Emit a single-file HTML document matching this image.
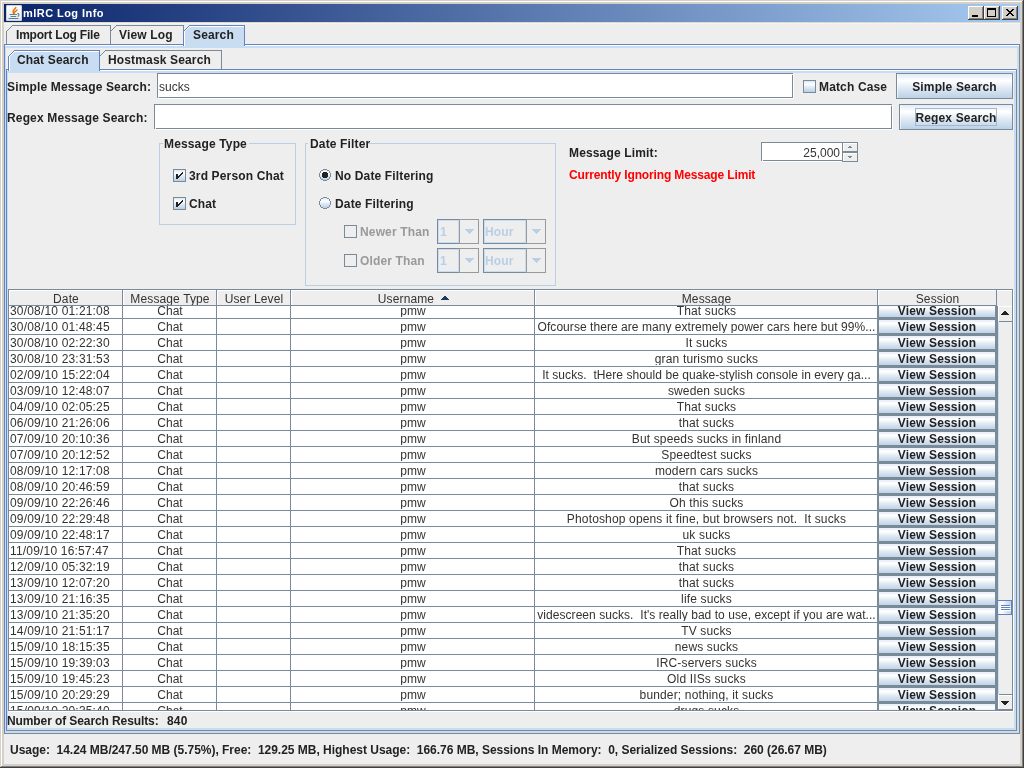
<!DOCTYPE html>
<html><head><meta charset="utf-8"><style>
html,body{margin:0;padding:0}
body{width:1024px;height:768px;position:relative;overflow:hidden;background:#d4d0c8;color:#222;font-family:"Liberation Sans",sans-serif}
div,span{position:absolute}
.t{white-space:pre}
.b{letter-spacing:0.15px}
body{will-change:transform}
</style></head><body>
<div style="left:1px;top:1px;width:1021px;height:1px;background:#ffffff;"></div>
<div style="left:1px;top:1px;width:1px;height:765px;background:#ffffff;"></div>
<div style="left:1022px;top:1px;width:1px;height:766px;background:#808080;"></div>
<div style="left:1px;top:766px;width:1022px;height:1px;background:#808080;"></div>
<div style="left:1023px;top:0px;width:1px;height:768px;background:#404040;"></div>
<div style="left:0px;top:767px;width:1024px;height:1px;background:#404040;"></div>
<div style="left:4px;top:4px;width:1016px;height:18px;background:;background:linear-gradient(to right,#0a246a,#a6caf0)"></div>
<div style="left:4px;top:22px;width:1016px;height:742px;background:#eeeeee;"></div>
<div style="left:4px;top:22px;width:1016px;height:1px;background:#dedad0;"></div>
<div style="left:4px;top:23px;width:1016px;height:1px;background:#f4f4f4;"></div>
<svg style="position:absolute;left:6px;top:5px" width="16" height="16" viewBox="0 0 16 16">
<defs><linearGradient id="ig" x1="0" y1="0" x2="0" y2="1"><stop offset="0" stop-color="#ffffff"/><stop offset="1" stop-color="#e8e8e4"/></linearGradient></defs>
<rect x="0" y="0" width="16" height="16" rx="1.5" fill="url(#ig)"/>
<rect x="0.5" y="0.5" width="15" height="15" rx="1.5" fill="none" stroke="#c9d3dc" stroke-width="1"/>
<path d="M9.8 2.6 L7.0 6.2 L7.6 8.6" fill="none" stroke="#e76f00" stroke-width="1.4" stroke-linecap="round"/>
<path d="M11.0 5.0 L8.4 7.4 L7.8 8.8" fill="none" stroke="#e76f00" stroke-width="1.3" stroke-linecap="round"/>
<path d="M4 9.5 H10.6 M5 11.5 H9.8 M3 13.5 H12" stroke="#5382a1" stroke-width="1.1" stroke-linecap="round"/>
<path d="M11.4 8.4 C13.4 8.6 13.4 11.0 11.6 11.6" fill="none" stroke="#5382a1" stroke-width="1.1"/>
</svg>
<span class="t b" style="left:23px;top:7.69px;font-size:11px;line-height:11px;font-weight:bold;color:#fff;letter-spacing:0.45px">mIRC Log Info</span>
<div style="left:968px;top:6px;width:16px;height:14px;background:#d4d0c8;"></div>
<div style="left:968px;top:6px;width:16px;height:1px;background:#ffffff;"></div>
<div style="left:968px;top:6px;width:1px;height:14px;background:#ffffff;"></div>
<div style="left:968px;top:19px;width:16px;height:1px;background:#404040;"></div>
<div style="left:983px;top:6px;width:1px;height:14px;background:#404040;"></div>
<div style="left:969px;top:18px;width:14px;height:1px;background:#808080;"></div>
<div style="left:982px;top:7px;width:1px;height:12px;background:#808080;"></div>
<div style="left:984px;top:6px;width:16px;height:14px;background:#d4d0c8;"></div>
<div style="left:984px;top:6px;width:16px;height:1px;background:#ffffff;"></div>
<div style="left:984px;top:6px;width:1px;height:14px;background:#ffffff;"></div>
<div style="left:984px;top:19px;width:16px;height:1px;background:#404040;"></div>
<div style="left:999px;top:6px;width:1px;height:14px;background:#404040;"></div>
<div style="left:985px;top:18px;width:14px;height:1px;background:#808080;"></div>
<div style="left:998px;top:7px;width:1px;height:12px;background:#808080;"></div>
<div style="left:1002px;top:6px;width:16px;height:14px;background:#d4d0c8;"></div>
<div style="left:1002px;top:6px;width:16px;height:1px;background:#ffffff;"></div>
<div style="left:1002px;top:6px;width:1px;height:14px;background:#ffffff;"></div>
<div style="left:1002px;top:19px;width:16px;height:1px;background:#404040;"></div>
<div style="left:1017px;top:6px;width:1px;height:14px;background:#404040;"></div>
<div style="left:1003px;top:18px;width:14px;height:1px;background:#808080;"></div>
<div style="left:1016px;top:7px;width:1px;height:12px;background:#808080;"></div>
<div style="left:972px;top:15px;width:6px;height:2px;background:#000;"></div>
<div style="left:987px;top:8px;width:9px;height:9px;background:transparent;box-sizing:border-box;border:1px solid #000;border-top-width:2px"></div>
<svg style="position:absolute;left:1002px;top:6px" width="16" height="14" viewBox="0 0 16 14" shape-rendering="crispEdges"><rect x="4" y="3" width="2" height="1" fill="#000"/><rect x="10" y="3" width="2" height="1" fill="#000"/><rect x="5" y="4" width="2" height="1" fill="#000"/><rect x="9" y="4" width="2" height="1" fill="#000"/><rect x="6" y="5" width="2" height="1" fill="#000"/><rect x="8" y="5" width="2" height="1" fill="#000"/><rect x="7" y="6" width="2" height="1" fill="#000"/><rect x="7" y="6" width="2" height="1" fill="#000"/><rect x="8" y="7" width="2" height="1" fill="#000"/><rect x="6" y="7" width="2" height="1" fill="#000"/><rect x="9" y="8" width="2" height="1" fill="#000"/><rect x="5" y="8" width="2" height="1" fill="#000"/><rect x="10" y="9" width="2" height="1" fill="#000"/><rect x="4" y="9" width="2" height="1" fill="#000"/></svg>
<div style="left:5px;top:46px;width:1014px;height:687px;background:#c8ddf2;"></div>
<div style="left:4px;top:44px;width:180px;height:1px;background:#6382bf;"></div>
<div style="left:244px;top:44px;width:775px;height:1px;background:#6382bf;"></div>
<div style="left:5px;top:45px;width:180px;height:1px;background:#ffffff;"></div>
<div style="left:245px;top:45px;width:774px;height:1px;background:#ffffff;"></div>
<div style="left:4px;top:44px;width:1px;height:690px;background:#6382bf;"></div>
<div style="left:1019px;top:44px;width:1px;height:690px;background:#7a8a99;"></div>
<div style="left:4px;top:733px;width:1016px;height:1px;background:#7a8a99;"></div>
<div style="left:6px;top:25px;width:239px;height:19px;background:#eeeeee;"></div>
<div style="left:7px;top:26px;width:103px;height:18px;background:#eeeeee;"></div>
<div style="left:6px;top:25px;width:6px;height:1px;background:#eeeeee;"></div>
<div style="left:6px;top:26px;width:5px;height:1px;background:#eeeeee;"></div>
<div style="left:6px;top:27px;width:4px;height:1px;background:#eeeeee;"></div>
<div style="left:6px;top:28px;width:3px;height:1px;background:#eeeeee;"></div>
<div style="left:6px;top:29px;width:2px;height:1px;background:#eeeeee;"></div>
<div style="left:6px;top:30px;width:1px;height:1px;background:#eeeeee;"></div>
<div style="left:6px;top:31px;width:1px;height:1px;background:#7a8a99;"></div>
<div style="left:7px;top:30px;width:1px;height:1px;background:#7a8a99;"></div>
<div style="left:8px;top:29px;width:1px;height:1px;background:#7a8a99;"></div>
<div style="left:9px;top:28px;width:1px;height:1px;background:#7a8a99;"></div>
<div style="left:10px;top:27px;width:1px;height:1px;background:#7a8a99;"></div>
<div style="left:11px;top:26px;width:1px;height:1px;background:#7a8a99;"></div>
<div style="left:12px;top:25px;width:99px;height:1px;background:#7a8a99;"></div>
<div style="left:6px;top:31px;width:1px;height:13px;background:#7a8a99;"></div>
<div style="left:110px;top:25px;width:1px;height:19px;background:#7a8a99;"></div>
<div style="left:111px;top:26px;width:72px;height:18px;background:#eeeeee;"></div>
<div style="left:111px;top:25px;width:5px;height:1px;background:#eeeeee;"></div>
<div style="left:111px;top:26px;width:4px;height:1px;background:#eeeeee;"></div>
<div style="left:111px;top:27px;width:3px;height:1px;background:#eeeeee;"></div>
<div style="left:111px;top:28px;width:2px;height:1px;background:#eeeeee;"></div>
<div style="left:111px;top:29px;width:1px;height:1px;background:#eeeeee;"></div>
<div style="left:111px;top:30px;width:1px;height:1px;background:#7a8a99;"></div>
<div style="left:112px;top:29px;width:1px;height:1px;background:#7a8a99;"></div>
<div style="left:113px;top:28px;width:1px;height:1px;background:#7a8a99;"></div>
<div style="left:114px;top:27px;width:1px;height:1px;background:#7a8a99;"></div>
<div style="left:115px;top:26px;width:1px;height:1px;background:#7a8a99;"></div>
<div style="left:116px;top:25px;width:68px;height:1px;background:#7a8a99;"></div>
<div style="left:110px;top:25px;width:1px;height:19px;background:#7a8a99;"></div>
<div style="left:183px;top:25px;width:1px;height:19px;background:#7a8a99;"></div>
<div style="left:184px;top:26px;width:60px;height:20px;background:#c8ddf2;"></div>
<div style="left:184px;top:25px;width:5px;height:1px;background:#eeeeee;"></div>
<div style="left:184px;top:26px;width:4px;height:1px;background:#eeeeee;"></div>
<div style="left:184px;top:27px;width:3px;height:1px;background:#eeeeee;"></div>
<div style="left:184px;top:28px;width:2px;height:1px;background:#eeeeee;"></div>
<div style="left:184px;top:29px;width:1px;height:1px;background:#eeeeee;"></div>
<div style="left:184px;top:30px;width:1px;height:1px;background:#6382bf;"></div>
<div style="left:185px;top:29px;width:1px;height:1px;background:#6382bf;"></div>
<div style="left:186px;top:28px;width:1px;height:1px;background:#6382bf;"></div>
<div style="left:187px;top:27px;width:1px;height:1px;background:#6382bf;"></div>
<div style="left:188px;top:26px;width:1px;height:1px;background:#6382bf;"></div>
<div style="left:189px;top:25px;width:56px;height:1px;background:#6382bf;"></div>
<div style="left:183px;top:25px;width:1px;height:21px;background:#6382bf;"></div>
<div style="left:185px;top:30px;width:1px;height:1px;background:#ffffff;"></div>
<div style="left:186px;top:29px;width:1px;height:1px;background:#ffffff;"></div>
<div style="left:187px;top:28px;width:1px;height:1px;background:#ffffff;"></div>
<div style="left:188px;top:27px;width:1px;height:1px;background:#ffffff;"></div>
<div style="left:189px;top:26px;width:55px;height:1px;background:#ffffff;"></div>
<div style="left:184px;top:31px;width:1px;height:15px;background:#ffffff;"></div>
<div style="left:244px;top:25px;width:1px;height:21px;background:#6382bf;"></div>
<div style="left:183px;top:25px;width:1px;height:6px;background:#7a8a99;"></div>
<div style="left:184px;top:44px;width:60px;height:4px;background:#c8ddf2;"></div>
<div style="left:184px;top:44px;width:1px;height:1px;background:#ffffff;"></div>
<div style="left:184px;top:45px;width:1px;height:1px;background:#ffffff;"></div>
<span class="t b" style="left:16px;top:28.84px;font-size:12px;line-height:12px;font-weight:bold;color:#222;letter-spacing:-0.2px">Import Log File</span>
<span class="t b" style="left:119px;top:28.84px;font-size:12px;line-height:12px;font-weight:bold;color:#222;">View Log</span>
<span class="t b" style="left:193px;top:28.84px;font-size:12px;line-height:12px;font-weight:bold;color:#222;">Search</span>
<div style="left:6px;top:48px;width:1011px;height:683px;background:#eeeeee;"></div>
<div style="left:7px;top:71px;width:1009px;height:659px;background:#c8ddf2;"></div>
<div style="left:6px;top:69px;width:93px;height:1px;background:#6382bf;"></div>
<div style="left:99px;top:69px;width:917px;height:1px;background:#6382bf;"></div>
<div style="left:7px;top:70px;width:3px;height:1px;background:#ffffff;"></div>
<div style="left:99px;top:70px;width:917px;height:1px;background:#ffffff;"></div>
<div style="left:6px;top:69px;width:1px;height:662px;background:#6382bf;"></div>
<div style="left:1016px;top:69px;width:1px;height:662px;background:#7a8a99;"></div>
<div style="left:6px;top:730px;width:1011px;height:1px;background:#7a8a99;"></div>
<div style="left:9px;top:51px;width:90px;height:18px;background:#eeeeee;"></div>
<div style="left:8px;top:50px;width:6px;height:1px;background:#eeeeee;"></div>
<div style="left:8px;top:51px;width:5px;height:1px;background:#eeeeee;"></div>
<div style="left:8px;top:52px;width:4px;height:1px;background:#eeeeee;"></div>
<div style="left:8px;top:53px;width:3px;height:1px;background:#eeeeee;"></div>
<div style="left:8px;top:54px;width:2px;height:1px;background:#eeeeee;"></div>
<div style="left:8px;top:55px;width:1px;height:1px;background:#eeeeee;"></div>
<div style="left:8px;top:56px;width:1px;height:1px;background:#7a8a99;"></div>
<div style="left:9px;top:55px;width:1px;height:1px;background:#7a8a99;"></div>
<div style="left:10px;top:54px;width:1px;height:1px;background:#7a8a99;"></div>
<div style="left:11px;top:53px;width:1px;height:1px;background:#7a8a99;"></div>
<div style="left:12px;top:52px;width:1px;height:1px;background:#7a8a99;"></div>
<div style="left:13px;top:51px;width:1px;height:1px;background:#7a8a99;"></div>
<div style="left:14px;top:50px;width:86px;height:1px;background:#7a8a99;"></div>
<div style="left:8px;top:56px;width:1px;height:13px;background:#7a8a99;"></div>
<div style="left:99px;top:50px;width:1px;height:19px;background:#7a8a99;"></div>
<div style="left:9px;top:51px;width:90px;height:20px;background:#c8ddf2;"></div>
<div style="left:8px;top:50px;width:6px;height:1px;background:#eeeeee;"></div>
<div style="left:8px;top:51px;width:5px;height:1px;background:#eeeeee;"></div>
<div style="left:8px;top:52px;width:4px;height:1px;background:#eeeeee;"></div>
<div style="left:8px;top:53px;width:3px;height:1px;background:#eeeeee;"></div>
<div style="left:8px;top:54px;width:2px;height:1px;background:#eeeeee;"></div>
<div style="left:8px;top:55px;width:1px;height:1px;background:#eeeeee;"></div>
<div style="left:8px;top:56px;width:1px;height:1px;background:#6382bf;"></div>
<div style="left:9px;top:55px;width:1px;height:1px;background:#6382bf;"></div>
<div style="left:10px;top:54px;width:1px;height:1px;background:#6382bf;"></div>
<div style="left:11px;top:53px;width:1px;height:1px;background:#6382bf;"></div>
<div style="left:12px;top:52px;width:1px;height:1px;background:#6382bf;"></div>
<div style="left:13px;top:51px;width:1px;height:1px;background:#6382bf;"></div>
<div style="left:14px;top:50px;width:86px;height:1px;background:#6382bf;"></div>
<div style="left:8px;top:56px;width:1px;height:15px;background:#6382bf;"></div>
<div style="left:9px;top:56px;width:1px;height:1px;background:#ffffff;"></div>
<div style="left:10px;top:55px;width:1px;height:1px;background:#ffffff;"></div>
<div style="left:11px;top:54px;width:1px;height:1px;background:#ffffff;"></div>
<div style="left:12px;top:53px;width:1px;height:1px;background:#ffffff;"></div>
<div style="left:13px;top:52px;width:1px;height:1px;background:#ffffff;"></div>
<div style="left:14px;top:51px;width:85px;height:1px;background:#ffffff;"></div>
<div style="left:9px;top:56px;width:1px;height:15px;background:#ffffff;"></div>
<div style="left:99px;top:50px;width:1px;height:21px;background:#6382bf;"></div>
<div style="left:10px;top:69px;width:89px;height:4px;background:#c8ddf2;"></div>
<div style="left:9px;top:69px;width:1px;height:1px;background:#ffffff;"></div>
<div style="left:9px;top:70px;width:1px;height:1px;background:#ffffff;"></div>
<div style="left:100px;top:51px;width:121px;height:18px;background:#eeeeee;"></div>
<div style="left:100px;top:50px;width:5px;height:1px;background:#eeeeee;"></div>
<div style="left:100px;top:51px;width:4px;height:1px;background:#eeeeee;"></div>
<div style="left:100px;top:52px;width:3px;height:1px;background:#eeeeee;"></div>
<div style="left:100px;top:53px;width:2px;height:1px;background:#eeeeee;"></div>
<div style="left:100px;top:54px;width:1px;height:1px;background:#eeeeee;"></div>
<div style="left:100px;top:55px;width:1px;height:1px;background:#7a8a99;"></div>
<div style="left:101px;top:54px;width:1px;height:1px;background:#7a8a99;"></div>
<div style="left:102px;top:53px;width:1px;height:1px;background:#7a8a99;"></div>
<div style="left:103px;top:52px;width:1px;height:1px;background:#7a8a99;"></div>
<div style="left:104px;top:51px;width:1px;height:1px;background:#7a8a99;"></div>
<div style="left:105px;top:50px;width:117px;height:1px;background:#7a8a99;"></div>
<div style="left:99px;top:50px;width:1px;height:19px;background:#7a8a99;"></div>
<div style="left:221px;top:50px;width:1px;height:19px;background:#7a8a99;"></div>
<div style="left:99px;top:50px;width:1px;height:6px;background:#6382bf;"></div>
<div style="left:99px;top:56px;width:1px;height:14px;background:#6382bf;"></div>
<span class="t b" style="left:17px;top:53.84px;font-size:12px;line-height:12px;font-weight:bold;color:#222;">Chat Search</span>
<span class="t b" style="left:108px;top:53.84px;font-size:12px;line-height:12px;font-weight:bold;color:#222;">Hostmask Search</span>
<div style="left:8px;top:73px;width:1006px;height:655px;background:#eeeeee;"></div>
<span class="t b" style="left:7px;top:80.84px;font-size:12px;line-height:12px;font-weight:bold;color:#222;">Simple Message Search:</span>
<div style="left:157px;top:73px;width:637px;height:26px;background:#ffffff;"></div>
<div style="left:157px;top:73px;width:636px;height:1px;background:#7a8a99;"></div>
<div style="left:157px;top:73px;width:1px;height:25px;background:#7a8a99;"></div>
<div style="left:157px;top:97px;width:636px;height:1px;background:#7a8a99;"></div>
<div style="left:792px;top:73px;width:1px;height:25px;background:#7a8a99;"></div>
<div style="left:158px;top:98px;width:636px;height:1px;background:#ffffff;"></div>
<div style="left:793px;top:74px;width:1px;height:25px;background:#ffffff;"></div>
<div style="left:157px;top:98px;width:1px;height:1px;background:#eeeeee;"></div>
<div style="left:158px;top:97px;width:1px;height:1px;background:#eeeeee;"></div>
<div style="left:793px;top:73px;width:1px;height:1px;background:#eeeeee;"></div>
<div style="left:792px;top:74px;width:1px;height:1px;background:#eeeeee;"></div>
<span class="t" style="left:159px;top:80.84px;font-size:12px;line-height:12px;font-weight:normal;color:#333;">sucks</span>
<span class="t b" style="left:7px;top:111.84px;font-size:12px;line-height:12px;font-weight:bold;color:#222;">Regex Message Search:</span>
<div style="left:154px;top:104px;width:739px;height:26px;background:#ffffff;"></div>
<div style="left:154px;top:104px;width:738px;height:1px;background:#7a8a99;"></div>
<div style="left:154px;top:104px;width:1px;height:25px;background:#7a8a99;"></div>
<div style="left:154px;top:128px;width:738px;height:1px;background:#7a8a99;"></div>
<div style="left:891px;top:104px;width:1px;height:25px;background:#7a8a99;"></div>
<div style="left:155px;top:129px;width:738px;height:1px;background:#ffffff;"></div>
<div style="left:892px;top:105px;width:1px;height:25px;background:#ffffff;"></div>
<div style="left:154px;top:129px;width:1px;height:1px;background:#eeeeee;"></div>
<div style="left:155px;top:128px;width:1px;height:1px;background:#eeeeee;"></div>
<div style="left:892px;top:104px;width:1px;height:1px;background:#eeeeee;"></div>
<div style="left:891px;top:105px;width:1px;height:1px;background:#eeeeee;"></div>
<div style="left:804px;top:81px;width:11px;height:11px;background:;background:linear-gradient(to bottom,#dde8f3 0%,#ffffff 30%,#dde8f3 60%,#b8cfe5 100%)"></div>
<div style="left:803px;top:80px;width:13px;height:1px;background:#7a8a99;"></div>
<div style="left:803px;top:80px;width:1px;height:13px;background:#7a8a99;"></div>
<div style="left:803px;top:92px;width:13px;height:1px;background:#7a8a99;"></div>
<div style="left:815px;top:80px;width:1px;height:13px;background:#7a8a99;"></div>
<span class="t b" style="left:819px;top:80.84px;font-size:12px;line-height:12px;font-weight:bold;color:#222;">Match Case</span>
<div style="left:896px;top:73px;width:117px;height:26px;background:;background:linear-gradient(to bottom,#dde8f3 0%,#ffffff 30%,#dde8f3 60%,#b8cfe5 100%)"></div>
<div style="left:896px;top:73px;width:117px;height:26px;background:transparent;box-sizing:border-box;border:1px solid #7a8a99"></div>
<div style="left:897px;top:74px;width:1px;height:24px;background:rgba(255,255,255,0.6);"></div>
<span class="t b" style="left:896px;width:117px;text-align:center;top:80.84px;font-size:12px;line-height:12px;font-weight:bold;color:#222;overflow:hidden;">Simple Search</span>
<div style="left:899px;top:104px;width:114px;height:26px;background:;background:linear-gradient(to bottom,#dde8f3 0%,#ffffff 30%,#dde8f3 60%,#b8cfe5 100%)"></div>
<div style="left:899px;top:104px;width:114px;height:26px;background:transparent;box-sizing:border-box;border:1px solid #7a8a99"></div>
<div style="left:900px;top:105px;width:1px;height:24px;background:rgba(255,255,255,0.6);"></div>
<span class="t b" style="left:899px;width:114px;text-align:center;top:111.84px;font-size:12px;line-height:12px;font-weight:bold;color:#222;overflow:hidden;">Regex Search</span>
<div style="left:915px;top:108px;width:82px;height:18px;background:transparent;box-sizing:border-box;border:1px solid #a3b8cc"></div>
<div style="left:159px;top:143px;width:137px;height:1px;background:#b8cfe5;"></div>
<div style="left:159px;top:143px;width:1px;height:82px;background:#b8cfe5;"></div>
<div style="left:295px;top:143px;width:1px;height:82px;background:#b8cfe5;"></div>
<div style="left:159px;top:224px;width:137px;height:1px;background:#b8cfe5;"></div>
<div style="left:163px;top:143px;width:86px;height:1px;background:#eeeeee;"></div>
<span class="t b" style="left:164px;top:137.84px;font-size:12px;line-height:12px;font-weight:bold;color:#222;">Message Type</span>
<div style="left:305px;top:143px;width:251px;height:1px;background:#b8cfe5;"></div>
<div style="left:305px;top:143px;width:1px;height:143px;background:#b8cfe5;"></div>
<div style="left:555px;top:143px;width:1px;height:143px;background:#b8cfe5;"></div>
<div style="left:305px;top:285px;width:251px;height:1px;background:#b8cfe5;"></div>
<div style="left:308px;top:143px;width:61px;height:1px;background:#eeeeee;"></div>
<span class="t b" style="left:310px;top:137.84px;font-size:12px;line-height:12px;font-weight:bold;color:#222;">Date Filter</span>
<div style="left:174px;top:170px;width:11px;height:11px;background:;background:linear-gradient(to bottom,#dde8f3 0%,#ffffff 30%,#dde8f3 60%,#b8cfe5 100%)"></div>
<div style="left:173px;top:169px;width:13px;height:1px;background:#7a8a99;"></div>
<div style="left:173px;top:169px;width:1px;height:13px;background:#7a8a99;"></div>
<div style="left:173px;top:181px;width:13px;height:1px;background:#7a8a99;"></div>
<div style="left:185px;top:169px;width:1px;height:13px;background:#7a8a99;"></div>
<svg style="position:absolute;left:173px;top:169px" width="13" height="13" viewBox="0 0 13 13" shape-rendering="crispEdges"><rect x="3" y="5" width="2" height="5" fill="#222"/><rect x="9" y="3" width="1" height="1" fill="#222"/><rect x="8" y="4" width="1" height="1" fill="#222"/><rect x="7" y="5" width="1" height="1" fill="#222"/><rect x="6" y="6" width="1" height="1" fill="#222"/><rect x="5" y="7" width="1" height="1" fill="#222"/><rect x="9" y="4" width="1" height="1" fill="#222"/><rect x="8" y="5" width="1" height="1" fill="#222"/><rect x="7" y="6" width="1" height="1" fill="#222"/><rect x="6" y="7" width="1" height="1" fill="#222"/><rect x="5" y="8" width="1" height="1" fill="#222"/></svg>
<span class="t b" style="left:189px;top:169.84px;font-size:12px;line-height:12px;font-weight:bold;color:#222;">3rd Person Chat</span>
<div style="left:174px;top:198px;width:11px;height:11px;background:;background:linear-gradient(to bottom,#dde8f3 0%,#ffffff 30%,#dde8f3 60%,#b8cfe5 100%)"></div>
<div style="left:173px;top:197px;width:13px;height:1px;background:#7a8a99;"></div>
<div style="left:173px;top:197px;width:1px;height:13px;background:#7a8a99;"></div>
<div style="left:173px;top:209px;width:13px;height:1px;background:#7a8a99;"></div>
<div style="left:185px;top:197px;width:1px;height:13px;background:#7a8a99;"></div>
<svg style="position:absolute;left:173px;top:197px" width="13" height="13" viewBox="0 0 13 13" shape-rendering="crispEdges"><rect x="3" y="5" width="2" height="5" fill="#222"/><rect x="9" y="3" width="1" height="1" fill="#222"/><rect x="8" y="4" width="1" height="1" fill="#222"/><rect x="7" y="5" width="1" height="1" fill="#222"/><rect x="6" y="6" width="1" height="1" fill="#222"/><rect x="5" y="7" width="1" height="1" fill="#222"/><rect x="9" y="4" width="1" height="1" fill="#222"/><rect x="8" y="5" width="1" height="1" fill="#222"/><rect x="7" y="6" width="1" height="1" fill="#222"/><rect x="6" y="7" width="1" height="1" fill="#222"/><rect x="5" y="8" width="1" height="1" fill="#222"/></svg>
<span class="t b" style="left:189px;top:197.84px;font-size:12px;line-height:12px;font-weight:bold;color:#222;">Chat</span>
<svg style="position:absolute;left:319px;top:169px" width="12" height="12" viewBox="0 0 12 12" shape-rendering="crispEdges"><defs><linearGradient id="rg" x1="0" y1="0" x2="0" y2="1"><stop offset="0" stop-color="#dde8f3"/><stop offset="0.3" stop-color="#fff"/><stop offset="0.6" stop-color="#dde8f3"/><stop offset="1" stop-color="#b8cfe5"/></linearGradient></defs><path d="M4 1H8V2H10V4H11V8H10V10H8V11H4V10H2V8H1V4H2V2H4Z" fill="url(#rg)"/><path d="M4 0H8V1H10V2H11V4H12V8H11V10H10V11H8V12H4V11H2V10H1V8H0V4H1V2H2V1H4Z M4 1V2H2V4H1V8H2V10H4V11H8V10H10V8H11V4H10V2H8V1Z" fill="#7a8a99" fill-rule="evenodd"/><path d="M4 3H8V4H9V8H8V9H4V8H3V4H4Z" fill="#222"/></svg>
<span class="t b" style="left:335px;top:169.84px;font-size:12px;line-height:12px;font-weight:bold;color:#222;">No Date Filtering</span>
<svg style="position:absolute;left:319px;top:197px" width="12" height="12" viewBox="0 0 12 12" shape-rendering="crispEdges"><defs><linearGradient id="rg" x1="0" y1="0" x2="0" y2="1"><stop offset="0" stop-color="#dde8f3"/><stop offset="0.3" stop-color="#fff"/><stop offset="0.6" stop-color="#dde8f3"/><stop offset="1" stop-color="#b8cfe5"/></linearGradient></defs><path d="M4 1H8V2H10V4H11V8H10V10H8V11H4V10H2V8H1V4H2V2H4Z" fill="url(#rg)"/><path d="M4 0H8V1H10V2H11V4H12V8H11V10H10V11H8V12H4V11H2V10H1V8H0V4H1V2H2V1H4Z M4 1V2H2V4H1V8H2V10H4V11H8V10H10V8H11V4H10V2H8V1Z" fill="#7a8a99" fill-rule="evenodd"/></svg>
<span class="t b" style="left:335px;top:197.84px;font-size:12px;line-height:12px;font-weight:bold;color:#222;">Date Filtering</span>
<div style="left:344px;top:225px;width:13px;height:13px;background:#eeeeee;"></div>
<div style="left:344px;top:225px;width:13px;height:13px;background:transparent;box-sizing:border-box;border:1px solid #7a8a99"></div>
<span class="t b" style="left:360px;top:225.84px;font-size:12px;line-height:12px;font-weight:bold;color:#999999;">Newer Than</span>
<div style="left:344px;top:254px;width:13px;height:13px;background:#eeeeee;"></div>
<div style="left:344px;top:254px;width:13px;height:13px;background:transparent;box-sizing:border-box;border:1px solid #7a8a99"></div>
<span class="t b" style="left:360px;top:254.84px;font-size:12px;line-height:12px;font-weight:bold;color:#999999;">Older Than</span>
<div style="left:437px;top:219px;width:42px;height:25px;background:#eeeeee;"></div>
<div style="left:437px;top:219px;width:23px;height:25px;background:transparent;box-sizing:border-box;border:1px solid #7a8a99"></div>
<div style="left:438px;top:220px;width:21px;height:23px;background:transparent;box-sizing:border-box;border:1px solid #c8ddf2"></div>
<div style="left:459px;top:219px;width:20px;height:25px;background:transparent;box-sizing:border-box;border:1px solid #999"></div>
<svg style="position:absolute;left:465px;top:229px" width="9" height="5" shape-rendering="crispEdges"><path d="M0 0H9V1H8V2H7V3H6V4H5V5H4V4H3V3H2V2H1V1H0Z" fill="#b8cfe5"/></svg>
<span class="t b" style="left:440px;top:225.84px;font-size:12px;line-height:12px;font-weight:bold;color:#b8cfe5;">1</span>
<div style="left:483px;top:219px;width:63px;height:25px;background:#eeeeee;"></div>
<div style="left:483px;top:219px;width:44px;height:25px;background:transparent;box-sizing:border-box;border:1px solid #7a8a99"></div>
<div style="left:484px;top:220px;width:42px;height:23px;background:transparent;box-sizing:border-box;border:1px solid #c8ddf2"></div>
<div style="left:526px;top:219px;width:20px;height:25px;background:transparent;box-sizing:border-box;border:1px solid #999"></div>
<svg style="position:absolute;left:532px;top:229px" width="9" height="5" shape-rendering="crispEdges"><path d="M0 0H9V1H8V2H7V3H6V4H5V5H4V4H3V3H2V2H1V1H0Z" fill="#b8cfe5"/></svg>
<span class="t b" style="left:485px;top:225.84px;font-size:12px;line-height:12px;font-weight:bold;color:#b8cfe5;">Hour</span>
<div style="left:437px;top:248px;width:42px;height:25px;background:#eeeeee;"></div>
<div style="left:437px;top:248px;width:23px;height:25px;background:transparent;box-sizing:border-box;border:1px solid #7a8a99"></div>
<div style="left:438px;top:249px;width:21px;height:23px;background:transparent;box-sizing:border-box;border:1px solid #c8ddf2"></div>
<div style="left:459px;top:248px;width:20px;height:25px;background:transparent;box-sizing:border-box;border:1px solid #999"></div>
<svg style="position:absolute;left:465px;top:258px" width="9" height="5" shape-rendering="crispEdges"><path d="M0 0H9V1H8V2H7V3H6V4H5V5H4V4H3V3H2V2H1V1H0Z" fill="#b8cfe5"/></svg>
<span class="t b" style="left:440px;top:254.84px;font-size:12px;line-height:12px;font-weight:bold;color:#b8cfe5;">1</span>
<div style="left:483px;top:248px;width:63px;height:25px;background:#eeeeee;"></div>
<div style="left:483px;top:248px;width:44px;height:25px;background:transparent;box-sizing:border-box;border:1px solid #7a8a99"></div>
<div style="left:484px;top:249px;width:42px;height:23px;background:transparent;box-sizing:border-box;border:1px solid #c8ddf2"></div>
<div style="left:526px;top:248px;width:20px;height:25px;background:transparent;box-sizing:border-box;border:1px solid #999"></div>
<svg style="position:absolute;left:532px;top:258px" width="9" height="5" shape-rendering="crispEdges"><path d="M0 0H9V1H8V2H7V3H6V4H5V5H4V4H3V3H2V2H1V1H0Z" fill="#b8cfe5"/></svg>
<span class="t b" style="left:485px;top:254.84px;font-size:12px;line-height:12px;font-weight:bold;color:#b8cfe5;">Hour</span>
<span class="t b" style="left:569px;top:146.84px;font-size:12px;line-height:12px;font-weight:bold;color:#222;">Message Limit:</span>
<span class="t b" style="left:569px;top:168.84px;font-size:12px;line-height:12px;font-weight:bold;color:#ff0000;letter-spacing:-0.14px">Currently Ignoring Message Limit</span>
<div style="left:761px;top:142px;width:82px;height:20px;background:#ffffff;"></div>
<div style="left:761px;top:142px;width:82px;height:1px;background:#7a8a99;"></div>
<div style="left:761px;top:142px;width:1px;height:19px;background:#7a8a99;"></div>
<div style="left:763px;top:160px;width:80px;height:1px;background:#7a8a99;"></div>
<div style="left:761px;top:161px;width:1px;height:1px;background:#eeeeee;"></div>
<span class="t" style="left:540px;width:300px;text-align:right;top:146.84px;font-size:12px;line-height:12px;font-weight:normal;color:#333;">25,000</span>
<div style="left:842px;top:142px;width:16px;height:10px;background:#eeeeee;"></div>
<div style="left:842px;top:142px;width:16px;height:10px;background:transparent;box-sizing:border-box;border:1px solid #7a8a99"></div>
<div style="left:843px;top:143px;width:14px;height:1px;background:#ffffff;"></div>
<div style="left:843px;top:143px;width:1px;height:8px;background:#ffffff;"></div>
<div style="left:842px;top:152px;width:16px;height:10px;background:#eeeeee;"></div>
<div style="left:842px;top:152px;width:16px;height:10px;background:transparent;box-sizing:border-box;border:1px solid #7a8a99"></div>
<div style="left:843px;top:153px;width:14px;height:1px;background:#ffffff;"></div>
<div style="left:843px;top:153px;width:1px;height:8px;background:#ffffff;"></div>
<svg style="position:absolute;left:848px;top:145px" width="4" height="13" shape-rendering="crispEdges"><path d="M1 0H3V1H4V2H0V1H1Z" fill="#7a8a99" transform="translate(0,1)"/><path d="M0 11H4V12H3V13H1V12H0Z" fill="#7a8a99" transform="translate(0,0)"/></svg>
<div style="left:8px;top:289px;width:1005px;height:422px;background:#ffffff;"></div>
<div style="left:8px;top:289px;width:1005px;height:1px;background:#7a8a99;"></div>
<div style="left:8px;top:289px;width:1px;height:422px;background:#7a8a99;"></div>
<div style="left:8px;top:710px;width:1005px;height:1px;background:#7a8a99;"></div>
<div style="left:1012px;top:289px;width:1px;height:422px;background:#7a8a99;"></div>
<div style="left:9px;top:711px;width:1005px;height:1px;background:#ffffff;"></div>
<div style="left:1013px;top:290px;width:1px;height:422px;background:#ffffff;"></div>
<div style="left:9px;top:290px;width:1003px;height:16px;background:#eeeeee;"></div>
<div style="left:9px;top:290px;width:113px;height:1px;background:#ffffff;"></div>
<div style="left:9px;top:290px;width:1px;height:15px;background:#ffffff;"></div>
<div style="left:122px;top:290px;width:1px;height:16px;background:#7a8a99;"></div>
<div style="left:9px;top:305px;width:114px;height:1px;background:#7a8a99;"></div>
<span class="t" style="left:9px;width:114px;text-align:center;top:292.84px;font-size:12px;line-height:12px;font-weight:normal;color:#333;overflow:hidden;letter-spacing:0.12px">Date</span>
<div style="left:123px;top:290px;width:93px;height:1px;background:#ffffff;"></div>
<div style="left:123px;top:290px;width:1px;height:15px;background:#ffffff;"></div>
<div style="left:216px;top:290px;width:1px;height:16px;background:#7a8a99;"></div>
<div style="left:123px;top:305px;width:94px;height:1px;background:#7a8a99;"></div>
<span class="t" style="left:123px;width:94px;text-align:center;top:292.84px;font-size:12px;line-height:12px;font-weight:normal;color:#333;overflow:hidden;letter-spacing:0.12px">Message Type</span>
<div style="left:217px;top:290px;width:73px;height:1px;background:#ffffff;"></div>
<div style="left:217px;top:290px;width:1px;height:15px;background:#ffffff;"></div>
<div style="left:290px;top:290px;width:1px;height:16px;background:#7a8a99;"></div>
<div style="left:217px;top:305px;width:74px;height:1px;background:#7a8a99;"></div>
<span class="t" style="left:217px;width:74px;text-align:center;top:292.84px;font-size:12px;line-height:12px;font-weight:normal;color:#333;overflow:hidden;letter-spacing:0.12px">User Level</span>
<div style="left:291px;top:290px;width:243px;height:1px;background:#ffffff;"></div>
<div style="left:291px;top:290px;width:1px;height:15px;background:#ffffff;"></div>
<div style="left:534px;top:290px;width:1px;height:16px;background:#7a8a99;"></div>
<div style="left:291px;top:305px;width:244px;height:1px;background:#7a8a99;"></div>
<span class="t" style="left:291px;width:244px;text-align:center;top:292.84px;font-size:12px;line-height:12px;font-weight:normal;color:#333;overflow:hidden;text-indent:-14px;letter-spacing:0.12px">Username</span>
<svg style="position:absolute;left:441px;top:296px" width="8" height="4" shape-rendering="crispEdges"><path d="M3 0H5V1H6V2H7V3H8V4H0V3H1V2H2V1H3Z" fill="#1e3b5b"/></svg>
<div style="left:535px;top:290px;width:342px;height:1px;background:#ffffff;"></div>
<div style="left:535px;top:290px;width:1px;height:15px;background:#ffffff;"></div>
<div style="left:877px;top:290px;width:1px;height:16px;background:#7a8a99;"></div>
<div style="left:535px;top:305px;width:343px;height:1px;background:#7a8a99;"></div>
<span class="t" style="left:535px;width:343px;text-align:center;top:292.84px;font-size:12px;line-height:12px;font-weight:normal;color:#333;overflow:hidden;letter-spacing:0.12px">Message</span>
<div style="left:878px;top:290px;width:118px;height:1px;background:#ffffff;"></div>
<div style="left:878px;top:290px;width:1px;height:15px;background:#ffffff;"></div>
<div style="left:996px;top:290px;width:1px;height:16px;background:#7a8a99;"></div>
<div style="left:878px;top:305px;width:119px;height:1px;background:#7a8a99;"></div>
<span class="t" style="left:878px;width:119px;text-align:center;top:292.84px;font-size:12px;line-height:12px;font-weight:normal;color:#333;overflow:hidden;letter-spacing:0.12px">Session</span>
<div style="left:997px;top:290px;width:15px;height:1px;background:#ffffff;"></div>
<div style="left:9px;top:306px;width:988px;height:404px;overflow:hidden"><span class="t" style="left:1px;top:-1.16px;font-size:12px;line-height:12px;font-weight:normal;letter-spacing:0.18px;color:#333">30/08/10 01:21:08</span><span class="t" style="left:114px;width:94px;text-align:center;top:-1.16px;font-size:12px;line-height:12px;font-weight:normal;overflow:hidden;color:#333;">Chat</span><span class="t" style="left:282px;width:244px;text-align:center;top:-1.16px;font-size:12px;line-height:12px;font-weight:normal;overflow:hidden;color:#333;">pmw</span><span class="t" style="left:526px;width:343px;text-align:center;top:-1.16px;font-size:12px;line-height:12px;font-weight:normal;overflow:hidden;color:#333;letter-spacing:0.15px">That sucks</span><div style="left:869px;top:-3px;width:118px;height:15px;background:;background:linear-gradient(to bottom,#dde8f3 0%,#ffffff 30%,#dde8f3 60%,#b8cfe5 100%)"></div><div style="left:869px;top:-3px;width:118px;height:15px;background:transparent;box-sizing:border-box;border:1px solid #7a8a99"></div><span class="t b" style="left:869px;width:118px;text-align:center;top:-1.16px;font-size:12px;line-height:12px;font-weight:bold;overflow:hidden;color:#222;">View Session</span><div style="left:0px;top:12px;width:988px;height:1px;background:#7a8a99;"></div><span class="t" style="left:1px;top:14.84px;font-size:12px;line-height:12px;font-weight:normal;letter-spacing:0.18px;color:#333">30/08/10 01:48:45</span><span class="t" style="left:114px;width:94px;text-align:center;top:14.84px;font-size:12px;line-height:12px;font-weight:normal;overflow:hidden;color:#333;">Chat</span><span class="t" style="left:282px;width:244px;text-align:center;top:14.84px;font-size:12px;line-height:12px;font-weight:normal;overflow:hidden;color:#333;">pmw</span><span class="t" style="left:526px;width:343px;text-align:center;top:14.84px;font-size:12px;line-height:12px;font-weight:normal;overflow:hidden;color:#333;letter-spacing:0.05px">Ofcourse there are many extremely power cars here but 99%...</span><div style="left:869px;top:13px;width:118px;height:15px;background:;background:linear-gradient(to bottom,#dde8f3 0%,#ffffff 30%,#dde8f3 60%,#b8cfe5 100%)"></div><div style="left:869px;top:13px;width:118px;height:15px;background:transparent;box-sizing:border-box;border:1px solid #7a8a99"></div><span class="t b" style="left:869px;width:118px;text-align:center;top:14.84px;font-size:12px;line-height:12px;font-weight:bold;overflow:hidden;color:#222;">View Session</span><div style="left:0px;top:28px;width:988px;height:1px;background:#7a8a99;"></div><span class="t" style="left:1px;top:30.84px;font-size:12px;line-height:12px;font-weight:normal;letter-spacing:0.18px;color:#333">30/08/10 02:22:30</span><span class="t" style="left:114px;width:94px;text-align:center;top:30.84px;font-size:12px;line-height:12px;font-weight:normal;overflow:hidden;color:#333;">Chat</span><span class="t" style="left:282px;width:244px;text-align:center;top:30.84px;font-size:12px;line-height:12px;font-weight:normal;overflow:hidden;color:#333;">pmw</span><span class="t" style="left:526px;width:343px;text-align:center;top:30.84px;font-size:12px;line-height:12px;font-weight:normal;overflow:hidden;color:#333;letter-spacing:0.15px">It sucks</span><div style="left:869px;top:29px;width:118px;height:15px;background:;background:linear-gradient(to bottom,#dde8f3 0%,#ffffff 30%,#dde8f3 60%,#b8cfe5 100%)"></div><div style="left:869px;top:29px;width:118px;height:15px;background:transparent;box-sizing:border-box;border:1px solid #7a8a99"></div><span class="t b" style="left:869px;width:118px;text-align:center;top:30.84px;font-size:12px;line-height:12px;font-weight:bold;overflow:hidden;color:#222;">View Session</span><div style="left:0px;top:44px;width:988px;height:1px;background:#7a8a99;"></div><span class="t" style="left:1px;top:46.84px;font-size:12px;line-height:12px;font-weight:normal;letter-spacing:0.18px;color:#333">30/08/10 23:31:53</span><span class="t" style="left:114px;width:94px;text-align:center;top:46.84px;font-size:12px;line-height:12px;font-weight:normal;overflow:hidden;color:#333;">Chat</span><span class="t" style="left:282px;width:244px;text-align:center;top:46.84px;font-size:12px;line-height:12px;font-weight:normal;overflow:hidden;color:#333;">pmw</span><span class="t" style="left:526px;width:343px;text-align:center;top:46.84px;font-size:12px;line-height:12px;font-weight:normal;overflow:hidden;color:#333;letter-spacing:0.15px">gran turismo sucks</span><div style="left:869px;top:45px;width:118px;height:15px;background:;background:linear-gradient(to bottom,#dde8f3 0%,#ffffff 30%,#dde8f3 60%,#b8cfe5 100%)"></div><div style="left:869px;top:45px;width:118px;height:15px;background:transparent;box-sizing:border-box;border:1px solid #7a8a99"></div><span class="t b" style="left:869px;width:118px;text-align:center;top:46.84px;font-size:12px;line-height:12px;font-weight:bold;overflow:hidden;color:#222;">View Session</span><div style="left:0px;top:60px;width:988px;height:1px;background:#7a8a99;"></div><span class="t" style="left:1px;top:62.84px;font-size:12px;line-height:12px;font-weight:normal;letter-spacing:0.18px;color:#333">02/09/10 15:22:04</span><span class="t" style="left:114px;width:94px;text-align:center;top:62.84px;font-size:12px;line-height:12px;font-weight:normal;overflow:hidden;color:#333;">Chat</span><span class="t" style="left:282px;width:244px;text-align:center;top:62.84px;font-size:12px;line-height:12px;font-weight:normal;overflow:hidden;color:#333;">pmw</span><span class="t" style="left:526px;width:343px;text-align:center;top:62.84px;font-size:12px;line-height:12px;font-weight:normal;overflow:hidden;color:#333;letter-spacing:0.05px">It sucks.  tHere should be quake-stylish console in every ga...</span><div style="left:869px;top:61px;width:118px;height:15px;background:;background:linear-gradient(to bottom,#dde8f3 0%,#ffffff 30%,#dde8f3 60%,#b8cfe5 100%)"></div><div style="left:869px;top:61px;width:118px;height:15px;background:transparent;box-sizing:border-box;border:1px solid #7a8a99"></div><span class="t b" style="left:869px;width:118px;text-align:center;top:62.84px;font-size:12px;line-height:12px;font-weight:bold;overflow:hidden;color:#222;">View Session</span><div style="left:0px;top:76px;width:988px;height:1px;background:#7a8a99;"></div><span class="t" style="left:1px;top:78.84px;font-size:12px;line-height:12px;font-weight:normal;letter-spacing:0.18px;color:#333">03/09/10 12:48:07</span><span class="t" style="left:114px;width:94px;text-align:center;top:78.84px;font-size:12px;line-height:12px;font-weight:normal;overflow:hidden;color:#333;">Chat</span><span class="t" style="left:282px;width:244px;text-align:center;top:78.84px;font-size:12px;line-height:12px;font-weight:normal;overflow:hidden;color:#333;">pmw</span><span class="t" style="left:526px;width:343px;text-align:center;top:78.84px;font-size:12px;line-height:12px;font-weight:normal;overflow:hidden;color:#333;letter-spacing:0.15px">sweden sucks</span><div style="left:869px;top:77px;width:118px;height:15px;background:;background:linear-gradient(to bottom,#dde8f3 0%,#ffffff 30%,#dde8f3 60%,#b8cfe5 100%)"></div><div style="left:869px;top:77px;width:118px;height:15px;background:transparent;box-sizing:border-box;border:1px solid #7a8a99"></div><span class="t b" style="left:869px;width:118px;text-align:center;top:78.84px;font-size:12px;line-height:12px;font-weight:bold;overflow:hidden;color:#222;">View Session</span><div style="left:0px;top:92px;width:988px;height:1px;background:#7a8a99;"></div><span class="t" style="left:1px;top:94.84px;font-size:12px;line-height:12px;font-weight:normal;letter-spacing:0.18px;color:#333">04/09/10 02:05:25</span><span class="t" style="left:114px;width:94px;text-align:center;top:94.84px;font-size:12px;line-height:12px;font-weight:normal;overflow:hidden;color:#333;">Chat</span><span class="t" style="left:282px;width:244px;text-align:center;top:94.84px;font-size:12px;line-height:12px;font-weight:normal;overflow:hidden;color:#333;">pmw</span><span class="t" style="left:526px;width:343px;text-align:center;top:94.84px;font-size:12px;line-height:12px;font-weight:normal;overflow:hidden;color:#333;letter-spacing:0.15px">That sucks</span><div style="left:869px;top:93px;width:118px;height:15px;background:;background:linear-gradient(to bottom,#dde8f3 0%,#ffffff 30%,#dde8f3 60%,#b8cfe5 100%)"></div><div style="left:869px;top:93px;width:118px;height:15px;background:transparent;box-sizing:border-box;border:1px solid #7a8a99"></div><span class="t b" style="left:869px;width:118px;text-align:center;top:94.84px;font-size:12px;line-height:12px;font-weight:bold;overflow:hidden;color:#222;">View Session</span><div style="left:0px;top:108px;width:988px;height:1px;background:#7a8a99;"></div><span class="t" style="left:1px;top:110.84px;font-size:12px;line-height:12px;font-weight:normal;letter-spacing:0.18px;color:#333">06/09/10 21:26:06</span><span class="t" style="left:114px;width:94px;text-align:center;top:110.84px;font-size:12px;line-height:12px;font-weight:normal;overflow:hidden;color:#333;">Chat</span><span class="t" style="left:282px;width:244px;text-align:center;top:110.84px;font-size:12px;line-height:12px;font-weight:normal;overflow:hidden;color:#333;">pmw</span><span class="t" style="left:526px;width:343px;text-align:center;top:110.84px;font-size:12px;line-height:12px;font-weight:normal;overflow:hidden;color:#333;letter-spacing:0.15px">that sucks</span><div style="left:869px;top:109px;width:118px;height:15px;background:;background:linear-gradient(to bottom,#dde8f3 0%,#ffffff 30%,#dde8f3 60%,#b8cfe5 100%)"></div><div style="left:869px;top:109px;width:118px;height:15px;background:transparent;box-sizing:border-box;border:1px solid #7a8a99"></div><span class="t b" style="left:869px;width:118px;text-align:center;top:110.84px;font-size:12px;line-height:12px;font-weight:bold;overflow:hidden;color:#222;">View Session</span><div style="left:0px;top:124px;width:988px;height:1px;background:#7a8a99;"></div><span class="t" style="left:1px;top:126.84px;font-size:12px;line-height:12px;font-weight:normal;letter-spacing:0.18px;color:#333">07/09/10 20:10:36</span><span class="t" style="left:114px;width:94px;text-align:center;top:126.84px;font-size:12px;line-height:12px;font-weight:normal;overflow:hidden;color:#333;">Chat</span><span class="t" style="left:282px;width:244px;text-align:center;top:126.84px;font-size:12px;line-height:12px;font-weight:normal;overflow:hidden;color:#333;">pmw</span><span class="t" style="left:526px;width:343px;text-align:center;top:126.84px;font-size:12px;line-height:12px;font-weight:normal;overflow:hidden;color:#333;letter-spacing:0.15px">But speeds sucks in finland</span><div style="left:869px;top:125px;width:118px;height:15px;background:;background:linear-gradient(to bottom,#dde8f3 0%,#ffffff 30%,#dde8f3 60%,#b8cfe5 100%)"></div><div style="left:869px;top:125px;width:118px;height:15px;background:transparent;box-sizing:border-box;border:1px solid #7a8a99"></div><span class="t b" style="left:869px;width:118px;text-align:center;top:126.84px;font-size:12px;line-height:12px;font-weight:bold;overflow:hidden;color:#222;">View Session</span><div style="left:0px;top:140px;width:988px;height:1px;background:#7a8a99;"></div><span class="t" style="left:1px;top:142.84px;font-size:12px;line-height:12px;font-weight:normal;letter-spacing:0.18px;color:#333">07/09/10 20:12:52</span><span class="t" style="left:114px;width:94px;text-align:center;top:142.84px;font-size:12px;line-height:12px;font-weight:normal;overflow:hidden;color:#333;">Chat</span><span class="t" style="left:282px;width:244px;text-align:center;top:142.84px;font-size:12px;line-height:12px;font-weight:normal;overflow:hidden;color:#333;">pmw</span><span class="t" style="left:526px;width:343px;text-align:center;top:142.84px;font-size:12px;line-height:12px;font-weight:normal;overflow:hidden;color:#333;letter-spacing:0.15px">Speedtest sucks</span><div style="left:869px;top:141px;width:118px;height:15px;background:;background:linear-gradient(to bottom,#dde8f3 0%,#ffffff 30%,#dde8f3 60%,#b8cfe5 100%)"></div><div style="left:869px;top:141px;width:118px;height:15px;background:transparent;box-sizing:border-box;border:1px solid #7a8a99"></div><span class="t b" style="left:869px;width:118px;text-align:center;top:142.84px;font-size:12px;line-height:12px;font-weight:bold;overflow:hidden;color:#222;">View Session</span><div style="left:0px;top:156px;width:988px;height:1px;background:#7a8a99;"></div><span class="t" style="left:1px;top:158.84px;font-size:12px;line-height:12px;font-weight:normal;letter-spacing:0.18px;color:#333">08/09/10 12:17:08</span><span class="t" style="left:114px;width:94px;text-align:center;top:158.84px;font-size:12px;line-height:12px;font-weight:normal;overflow:hidden;color:#333;">Chat</span><span class="t" style="left:282px;width:244px;text-align:center;top:158.84px;font-size:12px;line-height:12px;font-weight:normal;overflow:hidden;color:#333;">pmw</span><span class="t" style="left:526px;width:343px;text-align:center;top:158.84px;font-size:12px;line-height:12px;font-weight:normal;overflow:hidden;color:#333;letter-spacing:0.15px">modern cars sucks</span><div style="left:869px;top:157px;width:118px;height:15px;background:;background:linear-gradient(to bottom,#dde8f3 0%,#ffffff 30%,#dde8f3 60%,#b8cfe5 100%)"></div><div style="left:869px;top:157px;width:118px;height:15px;background:transparent;box-sizing:border-box;border:1px solid #7a8a99"></div><span class="t b" style="left:869px;width:118px;text-align:center;top:158.84px;font-size:12px;line-height:12px;font-weight:bold;overflow:hidden;color:#222;">View Session</span><div style="left:0px;top:172px;width:988px;height:1px;background:#7a8a99;"></div><span class="t" style="left:1px;top:174.84px;font-size:12px;line-height:12px;font-weight:normal;letter-spacing:0.18px;color:#333">08/09/10 20:46:59</span><span class="t" style="left:114px;width:94px;text-align:center;top:174.84px;font-size:12px;line-height:12px;font-weight:normal;overflow:hidden;color:#333;">Chat</span><span class="t" style="left:282px;width:244px;text-align:center;top:174.84px;font-size:12px;line-height:12px;font-weight:normal;overflow:hidden;color:#333;">pmw</span><span class="t" style="left:526px;width:343px;text-align:center;top:174.84px;font-size:12px;line-height:12px;font-weight:normal;overflow:hidden;color:#333;letter-spacing:0.15px">that sucks</span><div style="left:869px;top:173px;width:118px;height:15px;background:;background:linear-gradient(to bottom,#dde8f3 0%,#ffffff 30%,#dde8f3 60%,#b8cfe5 100%)"></div><div style="left:869px;top:173px;width:118px;height:15px;background:transparent;box-sizing:border-box;border:1px solid #7a8a99"></div><span class="t b" style="left:869px;width:118px;text-align:center;top:174.84px;font-size:12px;line-height:12px;font-weight:bold;overflow:hidden;color:#222;">View Session</span><div style="left:0px;top:188px;width:988px;height:1px;background:#7a8a99;"></div><span class="t" style="left:1px;top:190.84px;font-size:12px;line-height:12px;font-weight:normal;letter-spacing:0.18px;color:#333">09/09/10 22:26:46</span><span class="t" style="left:114px;width:94px;text-align:center;top:190.84px;font-size:12px;line-height:12px;font-weight:normal;overflow:hidden;color:#333;">Chat</span><span class="t" style="left:282px;width:244px;text-align:center;top:190.84px;font-size:12px;line-height:12px;font-weight:normal;overflow:hidden;color:#333;">pmw</span><span class="t" style="left:526px;width:343px;text-align:center;top:190.84px;font-size:12px;line-height:12px;font-weight:normal;overflow:hidden;color:#333;letter-spacing:0.15px">Oh this sucks</span><div style="left:869px;top:189px;width:118px;height:15px;background:;background:linear-gradient(to bottom,#dde8f3 0%,#ffffff 30%,#dde8f3 60%,#b8cfe5 100%)"></div><div style="left:869px;top:189px;width:118px;height:15px;background:transparent;box-sizing:border-box;border:1px solid #7a8a99"></div><span class="t b" style="left:869px;width:118px;text-align:center;top:190.84px;font-size:12px;line-height:12px;font-weight:bold;overflow:hidden;color:#222;">View Session</span><div style="left:0px;top:204px;width:988px;height:1px;background:#7a8a99;"></div><span class="t" style="left:1px;top:206.84px;font-size:12px;line-height:12px;font-weight:normal;letter-spacing:0.18px;color:#333">09/09/10 22:29:48</span><span class="t" style="left:114px;width:94px;text-align:center;top:206.84px;font-size:12px;line-height:12px;font-weight:normal;overflow:hidden;color:#333;">Chat</span><span class="t" style="left:282px;width:244px;text-align:center;top:206.84px;font-size:12px;line-height:12px;font-weight:normal;overflow:hidden;color:#333;">pmw</span><span class="t" style="left:526px;width:343px;text-align:center;top:206.84px;font-size:12px;line-height:12px;font-weight:normal;overflow:hidden;color:#333;letter-spacing:0.15px">Photoshop opens it fine, but browsers not.  It sucks</span><div style="left:869px;top:205px;width:118px;height:15px;background:;background:linear-gradient(to bottom,#dde8f3 0%,#ffffff 30%,#dde8f3 60%,#b8cfe5 100%)"></div><div style="left:869px;top:205px;width:118px;height:15px;background:transparent;box-sizing:border-box;border:1px solid #7a8a99"></div><span class="t b" style="left:869px;width:118px;text-align:center;top:206.84px;font-size:12px;line-height:12px;font-weight:bold;overflow:hidden;color:#222;">View Session</span><div style="left:0px;top:220px;width:988px;height:1px;background:#7a8a99;"></div><span class="t" style="left:1px;top:222.84px;font-size:12px;line-height:12px;font-weight:normal;letter-spacing:0.18px;color:#333">09/09/10 22:48:17</span><span class="t" style="left:114px;width:94px;text-align:center;top:222.84px;font-size:12px;line-height:12px;font-weight:normal;overflow:hidden;color:#333;">Chat</span><span class="t" style="left:282px;width:244px;text-align:center;top:222.84px;font-size:12px;line-height:12px;font-weight:normal;overflow:hidden;color:#333;">pmw</span><span class="t" style="left:526px;width:343px;text-align:center;top:222.84px;font-size:12px;line-height:12px;font-weight:normal;overflow:hidden;color:#333;letter-spacing:0.15px">uk sucks</span><div style="left:869px;top:221px;width:118px;height:15px;background:;background:linear-gradient(to bottom,#dde8f3 0%,#ffffff 30%,#dde8f3 60%,#b8cfe5 100%)"></div><div style="left:869px;top:221px;width:118px;height:15px;background:transparent;box-sizing:border-box;border:1px solid #7a8a99"></div><span class="t b" style="left:869px;width:118px;text-align:center;top:222.84px;font-size:12px;line-height:12px;font-weight:bold;overflow:hidden;color:#222;">View Session</span><div style="left:0px;top:236px;width:988px;height:1px;background:#7a8a99;"></div><span class="t" style="left:1px;top:238.84px;font-size:12px;line-height:12px;font-weight:normal;letter-spacing:0.18px;color:#333">11/09/10 16:57:47</span><span class="t" style="left:114px;width:94px;text-align:center;top:238.84px;font-size:12px;line-height:12px;font-weight:normal;overflow:hidden;color:#333;">Chat</span><span class="t" style="left:282px;width:244px;text-align:center;top:238.84px;font-size:12px;line-height:12px;font-weight:normal;overflow:hidden;color:#333;">pmw</span><span class="t" style="left:526px;width:343px;text-align:center;top:238.84px;font-size:12px;line-height:12px;font-weight:normal;overflow:hidden;color:#333;letter-spacing:0.15px">That sucks</span><div style="left:869px;top:237px;width:118px;height:15px;background:;background:linear-gradient(to bottom,#dde8f3 0%,#ffffff 30%,#dde8f3 60%,#b8cfe5 100%)"></div><div style="left:869px;top:237px;width:118px;height:15px;background:transparent;box-sizing:border-box;border:1px solid #7a8a99"></div><span class="t b" style="left:869px;width:118px;text-align:center;top:238.84px;font-size:12px;line-height:12px;font-weight:bold;overflow:hidden;color:#222;">View Session</span><div style="left:0px;top:252px;width:988px;height:1px;background:#7a8a99;"></div><span class="t" style="left:1px;top:254.84px;font-size:12px;line-height:12px;font-weight:normal;letter-spacing:0.18px;color:#333">12/09/10 05:32:19</span><span class="t" style="left:114px;width:94px;text-align:center;top:254.84px;font-size:12px;line-height:12px;font-weight:normal;overflow:hidden;color:#333;">Chat</span><span class="t" style="left:282px;width:244px;text-align:center;top:254.84px;font-size:12px;line-height:12px;font-weight:normal;overflow:hidden;color:#333;">pmw</span><span class="t" style="left:526px;width:343px;text-align:center;top:254.84px;font-size:12px;line-height:12px;font-weight:normal;overflow:hidden;color:#333;letter-spacing:0.15px">that sucks</span><div style="left:869px;top:253px;width:118px;height:15px;background:;background:linear-gradient(to bottom,#dde8f3 0%,#ffffff 30%,#dde8f3 60%,#b8cfe5 100%)"></div><div style="left:869px;top:253px;width:118px;height:15px;background:transparent;box-sizing:border-box;border:1px solid #7a8a99"></div><span class="t b" style="left:869px;width:118px;text-align:center;top:254.84px;font-size:12px;line-height:12px;font-weight:bold;overflow:hidden;color:#222;">View Session</span><div style="left:0px;top:268px;width:988px;height:1px;background:#7a8a99;"></div><span class="t" style="left:1px;top:270.84px;font-size:12px;line-height:12px;font-weight:normal;letter-spacing:0.18px;color:#333">13/09/10 12:07:20</span><span class="t" style="left:114px;width:94px;text-align:center;top:270.84px;font-size:12px;line-height:12px;font-weight:normal;overflow:hidden;color:#333;">Chat</span><span class="t" style="left:282px;width:244px;text-align:center;top:270.84px;font-size:12px;line-height:12px;font-weight:normal;overflow:hidden;color:#333;">pmw</span><span class="t" style="left:526px;width:343px;text-align:center;top:270.84px;font-size:12px;line-height:12px;font-weight:normal;overflow:hidden;color:#333;letter-spacing:0.15px">that sucks</span><div style="left:869px;top:269px;width:118px;height:15px;background:;background:linear-gradient(to bottom,#dde8f3 0%,#ffffff 30%,#dde8f3 60%,#b8cfe5 100%)"></div><div style="left:869px;top:269px;width:118px;height:15px;background:transparent;box-sizing:border-box;border:1px solid #7a8a99"></div><span class="t b" style="left:869px;width:118px;text-align:center;top:270.84px;font-size:12px;line-height:12px;font-weight:bold;overflow:hidden;color:#222;">View Session</span><div style="left:0px;top:284px;width:988px;height:1px;background:#7a8a99;"></div><span class="t" style="left:1px;top:286.84px;font-size:12px;line-height:12px;font-weight:normal;letter-spacing:0.18px;color:#333">13/09/10 21:16:35</span><span class="t" style="left:114px;width:94px;text-align:center;top:286.84px;font-size:12px;line-height:12px;font-weight:normal;overflow:hidden;color:#333;">Chat</span><span class="t" style="left:282px;width:244px;text-align:center;top:286.84px;font-size:12px;line-height:12px;font-weight:normal;overflow:hidden;color:#333;">pmw</span><span class="t" style="left:526px;width:343px;text-align:center;top:286.84px;font-size:12px;line-height:12px;font-weight:normal;overflow:hidden;color:#333;letter-spacing:0.15px">life sucks</span><div style="left:869px;top:285px;width:118px;height:15px;background:;background:linear-gradient(to bottom,#dde8f3 0%,#ffffff 30%,#dde8f3 60%,#b8cfe5 100%)"></div><div style="left:869px;top:285px;width:118px;height:15px;background:transparent;box-sizing:border-box;border:1px solid #7a8a99"></div><span class="t b" style="left:869px;width:118px;text-align:center;top:286.84px;font-size:12px;line-height:12px;font-weight:bold;overflow:hidden;color:#222;">View Session</span><div style="left:0px;top:300px;width:988px;height:1px;background:#7a8a99;"></div><span class="t" style="left:1px;top:302.84px;font-size:12px;line-height:12px;font-weight:normal;letter-spacing:0.18px;color:#333">13/09/10 21:35:20</span><span class="t" style="left:114px;width:94px;text-align:center;top:302.84px;font-size:12px;line-height:12px;font-weight:normal;overflow:hidden;color:#333;">Chat</span><span class="t" style="left:282px;width:244px;text-align:center;top:302.84px;font-size:12px;line-height:12px;font-weight:normal;overflow:hidden;color:#333;">pmw</span><span class="t" style="left:526px;width:343px;text-align:center;top:302.84px;font-size:12px;line-height:12px;font-weight:normal;overflow:hidden;color:#333;letter-spacing:0.05px">videscreen sucks.  It's really bad to use, except if you are wat...</span><div style="left:869px;top:301px;width:118px;height:15px;background:;background:linear-gradient(to bottom,#dde8f3 0%,#ffffff 30%,#dde8f3 60%,#b8cfe5 100%)"></div><div style="left:869px;top:301px;width:118px;height:15px;background:transparent;box-sizing:border-box;border:1px solid #7a8a99"></div><span class="t b" style="left:869px;width:118px;text-align:center;top:302.84px;font-size:12px;line-height:12px;font-weight:bold;overflow:hidden;color:#222;">View Session</span><div style="left:0px;top:316px;width:988px;height:1px;background:#7a8a99;"></div><span class="t" style="left:1px;top:318.84px;font-size:12px;line-height:12px;font-weight:normal;letter-spacing:0.18px;color:#333">14/09/10 21:51:17</span><span class="t" style="left:114px;width:94px;text-align:center;top:318.84px;font-size:12px;line-height:12px;font-weight:normal;overflow:hidden;color:#333;">Chat</span><span class="t" style="left:282px;width:244px;text-align:center;top:318.84px;font-size:12px;line-height:12px;font-weight:normal;overflow:hidden;color:#333;">pmw</span><span class="t" style="left:526px;width:343px;text-align:center;top:318.84px;font-size:12px;line-height:12px;font-weight:normal;overflow:hidden;color:#333;letter-spacing:0.15px">TV sucks</span><div style="left:869px;top:317px;width:118px;height:15px;background:;background:linear-gradient(to bottom,#dde8f3 0%,#ffffff 30%,#dde8f3 60%,#b8cfe5 100%)"></div><div style="left:869px;top:317px;width:118px;height:15px;background:transparent;box-sizing:border-box;border:1px solid #7a8a99"></div><span class="t b" style="left:869px;width:118px;text-align:center;top:318.84px;font-size:12px;line-height:12px;font-weight:bold;overflow:hidden;color:#222;">View Session</span><div style="left:0px;top:332px;width:988px;height:1px;background:#7a8a99;"></div><span class="t" style="left:1px;top:334.84px;font-size:12px;line-height:12px;font-weight:normal;letter-spacing:0.18px;color:#333">15/09/10 18:15:35</span><span class="t" style="left:114px;width:94px;text-align:center;top:334.84px;font-size:12px;line-height:12px;font-weight:normal;overflow:hidden;color:#333;">Chat</span><span class="t" style="left:282px;width:244px;text-align:center;top:334.84px;font-size:12px;line-height:12px;font-weight:normal;overflow:hidden;color:#333;">pmw</span><span class="t" style="left:526px;width:343px;text-align:center;top:334.84px;font-size:12px;line-height:12px;font-weight:normal;overflow:hidden;color:#333;letter-spacing:0.15px">news sucks</span><div style="left:869px;top:333px;width:118px;height:15px;background:;background:linear-gradient(to bottom,#dde8f3 0%,#ffffff 30%,#dde8f3 60%,#b8cfe5 100%)"></div><div style="left:869px;top:333px;width:118px;height:15px;background:transparent;box-sizing:border-box;border:1px solid #7a8a99"></div><span class="t b" style="left:869px;width:118px;text-align:center;top:334.84px;font-size:12px;line-height:12px;font-weight:bold;overflow:hidden;color:#222;">View Session</span><div style="left:0px;top:348px;width:988px;height:1px;background:#7a8a99;"></div><span class="t" style="left:1px;top:350.84px;font-size:12px;line-height:12px;font-weight:normal;letter-spacing:0.18px;color:#333">15/09/10 19:39:03</span><span class="t" style="left:114px;width:94px;text-align:center;top:350.84px;font-size:12px;line-height:12px;font-weight:normal;overflow:hidden;color:#333;">Chat</span><span class="t" style="left:282px;width:244px;text-align:center;top:350.84px;font-size:12px;line-height:12px;font-weight:normal;overflow:hidden;color:#333;">pmw</span><span class="t" style="left:526px;width:343px;text-align:center;top:350.84px;font-size:12px;line-height:12px;font-weight:normal;overflow:hidden;color:#333;letter-spacing:0.15px">IRC-servers sucks</span><div style="left:869px;top:349px;width:118px;height:15px;background:;background:linear-gradient(to bottom,#dde8f3 0%,#ffffff 30%,#dde8f3 60%,#b8cfe5 100%)"></div><div style="left:869px;top:349px;width:118px;height:15px;background:transparent;box-sizing:border-box;border:1px solid #7a8a99"></div><span class="t b" style="left:869px;width:118px;text-align:center;top:350.84px;font-size:12px;line-height:12px;font-weight:bold;overflow:hidden;color:#222;">View Session</span><div style="left:0px;top:364px;width:988px;height:1px;background:#7a8a99;"></div><span class="t" style="left:1px;top:366.84px;font-size:12px;line-height:12px;font-weight:normal;letter-spacing:0.18px;color:#333">15/09/10 19:45:23</span><span class="t" style="left:114px;width:94px;text-align:center;top:366.84px;font-size:12px;line-height:12px;font-weight:normal;overflow:hidden;color:#333;">Chat</span><span class="t" style="left:282px;width:244px;text-align:center;top:366.84px;font-size:12px;line-height:12px;font-weight:normal;overflow:hidden;color:#333;">pmw</span><span class="t" style="left:526px;width:343px;text-align:center;top:366.84px;font-size:12px;line-height:12px;font-weight:normal;overflow:hidden;color:#333;letter-spacing:0.15px">Old IISs sucks</span><div style="left:869px;top:365px;width:118px;height:15px;background:;background:linear-gradient(to bottom,#dde8f3 0%,#ffffff 30%,#dde8f3 60%,#b8cfe5 100%)"></div><div style="left:869px;top:365px;width:118px;height:15px;background:transparent;box-sizing:border-box;border:1px solid #7a8a99"></div><span class="t b" style="left:869px;width:118px;text-align:center;top:366.84px;font-size:12px;line-height:12px;font-weight:bold;overflow:hidden;color:#222;">View Session</span><div style="left:0px;top:380px;width:988px;height:1px;background:#7a8a99;"></div><span class="t" style="left:1px;top:382.84px;font-size:12px;line-height:12px;font-weight:normal;letter-spacing:0.18px;color:#333">15/09/10 20:29:29</span><span class="t" style="left:114px;width:94px;text-align:center;top:382.84px;font-size:12px;line-height:12px;font-weight:normal;overflow:hidden;color:#333;">Chat</span><span class="t" style="left:282px;width:244px;text-align:center;top:382.84px;font-size:12px;line-height:12px;font-weight:normal;overflow:hidden;color:#333;">pmw</span><span class="t" style="left:526px;width:343px;text-align:center;top:382.84px;font-size:12px;line-height:12px;font-weight:normal;overflow:hidden;color:#333;letter-spacing:0.15px">bunder; nothing, it sucks</span><div style="left:869px;top:381px;width:118px;height:15px;background:;background:linear-gradient(to bottom,#dde8f3 0%,#ffffff 30%,#dde8f3 60%,#b8cfe5 100%)"></div><div style="left:869px;top:381px;width:118px;height:15px;background:transparent;box-sizing:border-box;border:1px solid #7a8a99"></div><span class="t b" style="left:869px;width:118px;text-align:center;top:382.84px;font-size:12px;line-height:12px;font-weight:bold;overflow:hidden;color:#222;">View Session</span><div style="left:0px;top:396px;width:988px;height:1px;background:#7a8a99;"></div><span class="t" style="left:1px;top:398.84px;font-size:12px;line-height:12px;font-weight:normal;letter-spacing:0.18px;color:#333">15/09/10 20:35:40</span><span class="t" style="left:114px;width:94px;text-align:center;top:398.84px;font-size:12px;line-height:12px;font-weight:normal;overflow:hidden;color:#333;">Chat</span><span class="t" style="left:282px;width:244px;text-align:center;top:398.84px;font-size:12px;line-height:12px;font-weight:normal;overflow:hidden;color:#333;">pmw</span><span class="t" style="left:526px;width:343px;text-align:center;top:398.84px;font-size:12px;line-height:12px;font-weight:normal;overflow:hidden;color:#333;letter-spacing:0.15px">drugs sucks</span><div style="left:869px;top:397px;width:118px;height:15px;background:;background:linear-gradient(to bottom,#dde8f3 0%,#ffffff 30%,#dde8f3 60%,#b8cfe5 100%)"></div><div style="left:869px;top:397px;width:118px;height:15px;background:transparent;box-sizing:border-box;border:1px solid #7a8a99"></div><span class="t b" style="left:869px;width:118px;text-align:center;top:398.84px;font-size:12px;line-height:12px;font-weight:bold;overflow:hidden;color:#222;">View Session</span><div style="left:0px;top:412px;width:988px;height:1px;background:#7a8a99;"></div><div style="left:113px;top:0px;width:1px;height:404px;background:#7a8a99;"></div><div style="left:207px;top:0px;width:1px;height:404px;background:#7a8a99;"></div><div style="left:281px;top:0px;width:1px;height:404px;background:#7a8a99;"></div><div style="left:525px;top:0px;width:1px;height:404px;background:#7a8a99;"></div><div style="left:868px;top:0px;width:1px;height:404px;background:#7a8a99;"></div><div style="left:987px;top:0px;width:1px;height:404px;background:#7a8a99;"></div></div>
<div style="left:997px;top:306px;width:15px;height:404px;background:#eeeeee;"></div>
<div style="left:997px;top:306px;width:1px;height:404px;background:#7a8a99;"></div>
<div style="left:998px;top:322px;width:1px;height:372px;background:#c8ddf2;"></div>
<div style="left:998px;top:306px;width:14px;height:1px;background:#ffffff;"></div>
<div style="left:998px;top:306px;width:1px;height:15px;background:#ffffff;"></div>
<div style="left:999px;top:321px;width:13px;height:1px;background:#7a8a99;"></div>
<svg style="position:absolute;left:1001px;top:311px" width="8" height="4" shape-rendering="crispEdges"><path d="M3 0H5V1H6V2H7V3H8V4H0V3H1V2H2V1H3Z" fill="#222"/></svg>
<div style="left:999px;top:694px;width:13px;height:1px;background:#7a8a99;"></div>
<div style="left:998px;top:695px;width:14px;height:1px;background:#ffffff;"></div>
<div style="left:998px;top:695px;width:1px;height:15px;background:#ffffff;"></div>
<div style="left:998px;top:709px;width:14px;height:1px;background:#7a8a99;"></div>
<svg style="position:absolute;left:1001px;top:701px" width="8" height="4" shape-rendering="crispEdges"><path d="M0 0H8V1H7V2H6V3H5V4H3V3H2V2H1V1H0Z" fill="#222"/></svg>
<div style="left:997px;top:600px;width:15px;height:15px;background:;background:linear-gradient(to right,#dde8f3 0%,#ffffff 30%,#dde8f3 60%,#b8cfe5 100%)"></div>
<div style="left:997px;top:600px;width:15px;height:15px;background:transparent;box-sizing:border-box;border:1px solid #6382bf"></div>
<div style="left:1001px;top:605px;width:9px;height:1px;background:#6382bf;"></div>
<div style="left:1001px;top:607px;width:9px;height:1px;background:#6382bf;"></div>
<div style="left:1001px;top:609px;width:9px;height:1px;background:#6382bf;"></div>
<div style="left:1002px;top:606px;width:9px;height:1px;background:#ffffff;"></div>
<div style="left:1002px;top:608px;width:9px;height:1px;background:#ffffff;"></div>
<div style="left:1002px;top:610px;width:9px;height:1px;background:#ffffff;"></div>
<span class="t b" style="left:7px;top:714.84px;font-size:12px;line-height:12px;font-weight:bold;color:#222;letter-spacing:-0.1px">Number of Search Results:</span>
<span class="t b" style="left:167px;top:714.84px;font-size:12px;line-height:12px;font-weight:bold;color:#222;">840</span>
<span class="t b" style="left:10px;top:743.84px;font-size:12px;line-height:12px;font-weight:bold;color:#222;letter-spacing:-0.02px">Usage:  14.24 MB/247.50 MB (5.75%), Free:  129.25 MB, Highest Usage:  166.76 MB, Sessions In Memory:  0, Serialized Sessions:  260 (26.67 MB)</span>
</body></html>
